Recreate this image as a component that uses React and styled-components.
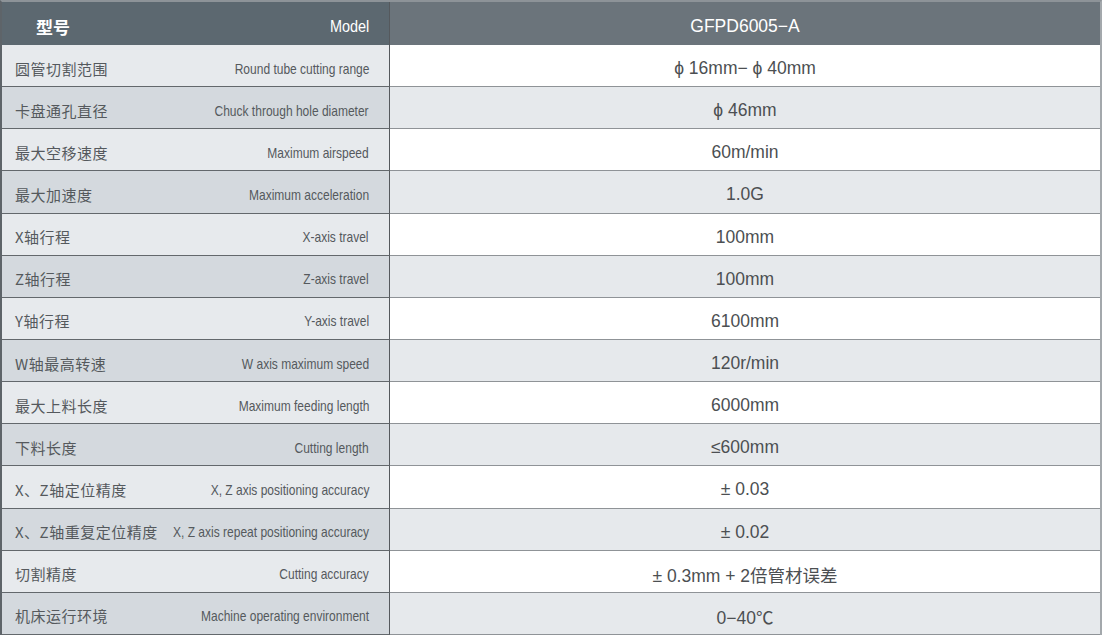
import React from 'react';
import styled, { createGlobalStyle } from 'styled-components';

const GlobalStyle = createGlobalStyle`
	html, body{
		margin: 0;
		padding: 0;
		background: #ffffff;
	}
	body{
		font-family: "Liberation Sans", "Noto Sans CJK SC", sans-serif;
	}
`;

const specs = [
	['圆管切割范围', 'Round tube cutting range', 'ϕ 16mm− ϕ 40mm'],
	['卡盘通孔直径', 'Chuck through hole diameter', 'ϕ 46mm'],
	['最大空移速度', 'Maximum airspeed', '60m/min'],
	['最大加速度', 'Maximum acceleration', '1.0G'],
	['X轴行程', 'X-axis travel', '100mm'],
	['Z轴行程', 'Z-axis travel', '100mm'],
	['Y轴行程', 'Y-axis travel', '6100mm'],
	['W轴最高转速', 'W axis maximum speed', '120r/min'],
	['最大上料长度', 'Maximum feeding length', '6000mm'],
	['下料长度', 'Cutting length', '≤600mm'],
	['X、Z轴定位精度', 'X, Z axis positioning accuracy', '± 0.03'],
	['X、Z轴重复定位精度', 'X, Z axis repeat positioning accuracy', '± 0.02'],
	['切割精度', 'Cutting accuracy', '± 0.3mm + 2倍管材误差'],
	['机床运行环境', 'Machine operating environment', '0−40℃'],
];

const Table = styled.div`
	width: 1102px;
	height: 635px;
	box-sizing: border-box;
	display: flex;
	flex-direction: column;
	border-top: 2px solid #8d9398;
	border-left: 2px solid #5e6469;
	border-right: 2px solid #a3a8ac;
`;

const Row = styled.div`
	display: grid;
	grid-template-columns: 388px 1fr;
	flex: ${p => (p.$head ? '0 0 43px' : '1 1 0')};
`;

const Label = styled.div`
	display: flex;
	align-items: center;
	box-sizing: border-box;
	padding: ${p => (p.$head ? '6px' : '5px')} 20px 0 ${p => (p.$head ? '34px' : '13px')};
	border-right: 1px solid #55595d;
	border-bottom: ${p => (p.$head ? 'none' : '1px solid #63686c')};
	background: ${p => (p.$head ? '#5c6870' : p.$dark ? '#d4d9de' : '#e7eaed')};
	color: ${p => (p.$head ? '#ffffff' : '#55595d')};
`;

const Cn = styled.span`
	flex-shrink: 0;
	font-family: "Noto Sans CJK SC", sans-serif;
	font-size: ${p => (p.$head ? '17px' : '15px')};
	font-weight: ${p => (p.$head ? 700 : 400)};
	letter-spacing: ${p => (p.$head ? '0' : '0.5px')};
	white-space: nowrap;
`;

const EnBox = styled.div`
	flex: 1;
	min-width: 0;
	display: flex;
	justify-content: flex-end;
`;

const En = styled.span`
	flex-shrink: 0;
	display: inline-block;
	font-family: "Liberation Sans", sans-serif;
	font-size: ${p => (p.$head ? '17px' : '15px')};
	white-space: nowrap;
	transform: scaleX(${p => (p.$head ? 0.85 : 0.8)});
	transform-origin: right center;
`;

const Value = styled.div`
	display: flex;
	align-items: center;
	justify-content: center;
	box-sizing: border-box;
	padding-top: 6px;
	font-family: "Liberation Sans", "Noto Sans CJK SC", sans-serif;
	font-size: 17.5px;
	border-bottom: ${p => (p.$head ? 'none' : '1px solid #8f9397')};
	background: ${p => (p.$head ? '#6b747b' : p.$dark ? '#e6e9ec' : '#ffffff')};
	color: ${p => (p.$head ? '#ffffff' : '#4c4f52')};
	white-space: pre;
`;

export default function App(){
	return (
		<>
			<GlobalStyle />
			<Table>
				<Row $head>
					<Label $head>
						<Cn $head>型号</Cn>
						<EnBox><En $head>Model</En></EnBox>
					</Label>
					<Value $head>GFPD6005−A</Value>
				</Row>
				{specs.map(([cn, en, val], i) => (
					<Row key={cn}>
						<Label $dark={i % 2 === 1}>
							<Cn>{cn}</Cn>
							<EnBox><En>{en}</En></EnBox>
						</Label>
						<Value $dark={i % 2 === 1}>{val}</Value>
					</Row>
				))}
			</Table>
		</>
	);
}
